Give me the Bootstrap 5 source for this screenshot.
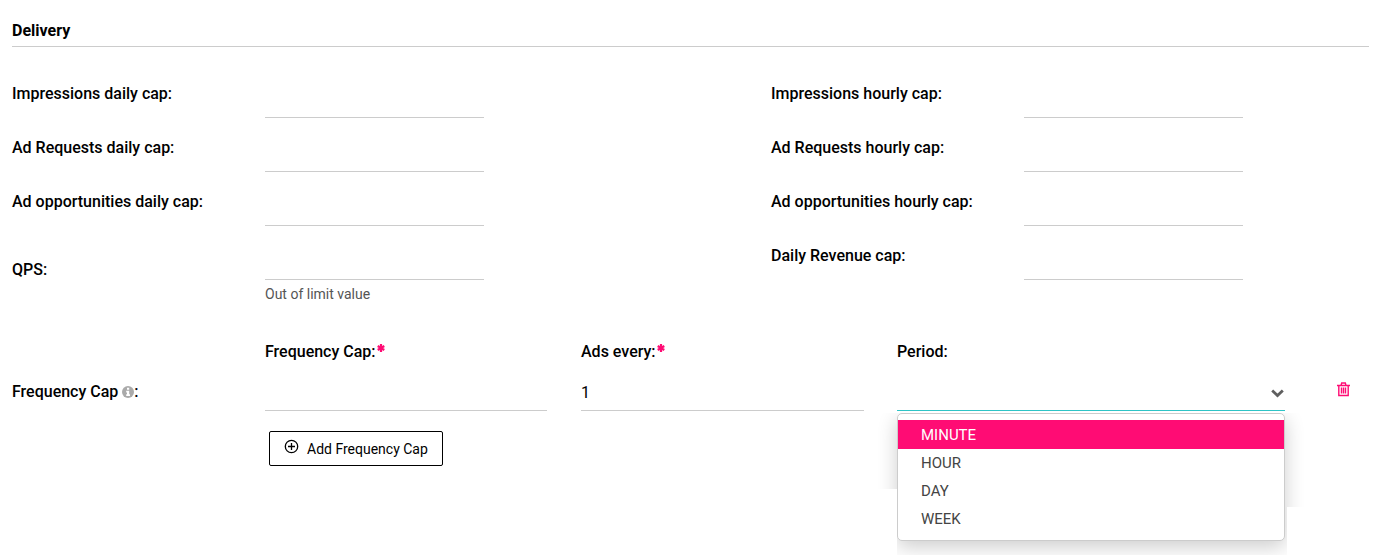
<!DOCTYPE html>
<html lang="en">
<head>
<meta charset="utf-8">
<meta name="viewport" content="width=device-width, initial-scale=1">
<title>Delivery</title>
<link href="https://cdn.jsdelivr.net/npm/bootstrap@5.3.0/dist/css/bootstrap.min.css" rel="stylesheet">
<style>
  body { font-family: Roboto, "Liberation Sans", sans-serif; font-size: 16px; line-height: 24px; color: #000; background: #fff; }
  .delivery { min-height: 100vh; padding: 19px 23px 88px 12px; }
  .section-title { font-size: 16px; font-weight: 700; line-height: 24px; padding-bottom: 3px; border-bottom: 1px solid #ccc; margin-bottom: 34px; }
  label, .col-title { font-weight: 500; }
  .cap-row { display: grid; grid-template-columns: 253fr 219fr 287fr 253fr 219fr 126fr; min-height: 54px; align-items: start; }
  .cap-row > * { min-width: 0; }
  .cap-row > label { padding-top: 1px; }
  .cap-row > .mid-label { padding-top: 15px; }
  .line-input { display: block; width: 100%; height: 37px; padding: 0 4px 0 0; border: 0; border-bottom: 1px solid #ccc; border-radius: 0; background: transparent; color: #000; font-size: 16px; outline: 0; }
  .freq-grid { display: grid; grid-template-columns: 253fr 282fr 34fr 283fr 33fr 388fr 84fr; }
  .freq-heads { padding-top: 36px; padding-bottom: 10px; }
  .col-title { padding-top: 6px; }
  .info-icon { vertical-align: -1px; }
  .hint { font-size: 14px; line-height: 20px; color: #555; padding-top: 4px; }
  .req { color: #ff0c74; margin-left: 1px; vertical-align: 5px; }
  .period-box { position: relative; height: 37px; border-bottom: 1px solid #2ec4c6; }
  .period-box select { height: 36px; border: 0; appearance: none; }
  .chevron { position: absolute; right: 1px; top: 15px; pointer-events: none; }
  .period-menu { position: absolute; top: 39px; left: 0; width: 100%; margin: 0; padding: 6px 0 7px; list-style: none; background: #fff; border: 1px solid #ccc; border-radius: 5px; box-shadow: 0 6px 20px rgba(0,0,0,.2);
    clip-path: polygon(-24px 0, calc(100% + 24px) 0, calc(100% + 24px) 94px, calc(100% + 2px) 94px, calc(100% + 2px) calc(100% + 24px), 0 calc(100% + 24px), 0 76px, -24px 76px); }
  .period-menu button { display: block; width: 100%; height: 28px; padding: 0 23px; border: 0; background: none; color: #444; font-size: 15px; line-height: 26px; text-align: left; }
  .period-menu button.active { height: 29px; background: #ff0c74; color: #fff; }
  .add-btn { height: 35px; margin: 20px 0 0 4px; padding: 0 14px; border: 1px solid #000; border-radius: 2px; background: #fff; color: #000; font-size: 14px; }
</style>
</head>
<body>
<main class="delivery">
  <h1 class="section-title">Delivery</h1>
  <form>
    <div class="cap-row">
      <label for="imp-day">Impressions daily cap:</label><input class="line-input" id="imp-day" type="text"><span></span>
      <label for="imp-hour">Impressions hourly cap:</label><input class="line-input" id="imp-hour" type="text">
    </div>
    <div class="cap-row">
      <label for="req-day">Ad Requests daily cap:</label><input class="line-input" id="req-day" type="text"><span></span>
      <label for="req-hour">Ad Requests hourly cap:</label><input class="line-input" id="req-hour" type="text">
    </div>
    <div class="cap-row">
      <label for="opp-day">Ad opportunities daily cap:</label><input class="line-input" id="opp-day" type="text"><span></span>
      <label for="opp-hour">Ad opportunities hourly cap:</label><input class="line-input" id="opp-hour" type="text">
    </div>
    <div class="cap-row">
      <label class="mid-label" for="qps">QPS:</label>
      <div><input class="line-input" id="qps" type="text" aria-describedby="qps-hint"><div class="hint" id="qps-hint">Out of limit value</div></div><span></span>
      <label for="revenue">Daily Revenue cap:</label><input class="line-input" id="revenue" type="text">
    </div>

    <div class="freq-grid freq-heads">
      <span></span>
      <label for="freq">Frequency Cap:<svg class="req" width="8" height="8" viewBox="0 0 8 8" aria-hidden="true"><path d="M4 0v8M.7 2l6.6 4M7.3 2L.7 6" stroke="currentColor" stroke-width="2.2"/></svg></label><span></span>
      <label for="every">Ads every:<svg class="req" width="8" height="8" viewBox="0 0 8 8" aria-hidden="true"><path d="M4 0v8M.7 2l6.6 4M7.3 2L.7 6" stroke="currentColor" stroke-width="2.2"/></svg></label><span></span>
      <label for="period">Period:</label>
    </div>
    <div class="freq-grid">
      <div class="col-title">Frequency Cap <svg class="info-icon" width="12" height="12" viewBox="0 0 12 12" aria-hidden="true"><circle cx="6" cy="6" r="6" fill="#aaa"/><path d="M5 1.8h2.2v2H5zM4.2 4.8h3v3.4H8V10H4.2V8.2H5V6.4H4.2z" fill="#fff"/></svg>:</div>
      <input class="line-input" id="freq" type="text"><span></span>
      <input class="line-input" id="every" type="text" value="1"><span></span>
      <div class="period-box">
        <select class="line-input" id="period"><option selected></option><option>MINUTE</option><option>HOUR</option><option>DAY</option><option>WEEK</option></select>
        <svg class="chevron" width="13" height="9" viewBox="0 0 13 9" aria-hidden="true"><path d="M1.2 1.5l5.3 5 5.3-5" fill="none" stroke="#5f5f5f" stroke-width="2.8"/></svg>
        <ul class="period-menu">
          <li><button class="active" type="button">MINUTE</button></li>
          <li><button type="button">HOUR</button></li>
          <li><button type="button">DAY</button></li>
          <li><button type="button">WEEK</button></li>
        </ul>
      </div>
      <div class="d-flex justify-content-center ps-4 pt-2 ms-2">
        <button class="btn p-0 border-0 d-flex align-self-start" type="button" aria-label="Delete frequency cap"><svg width="13" height="15" viewBox="0 0 13 15" fill="none" stroke="#ff0c74" stroke-width="1.4" aria-hidden="true"><path d="M0 3.5h13M1.8 3.5v10h9.4v-10M4 3.5l.7-2.5h3.6L9 3.5M4.5 5.500v6M6.5 5.500v6M8.5 5.500v6"/></svg></button>
      </div>
    </div>
    <div class="freq-grid">
      <span></span>
      <div><button class="add-btn d-inline-flex align-items-center" type="button"><svg class="me-2 mb-1" width="15" height="15" viewBox="0 0 15 15" fill="none" stroke="#000" stroke-width="1.3" aria-hidden="true"><circle cx="7.5" cy="7.5" r="6.2"/><path d="M7.5 4v7M4 7.5h7"/></svg><span class="text-nowrap">Add Frequency Cap</span></button></div>
    </div>
  </form>
</main>
<script src="https://cdn.jsdelivr.net/npm/bootstrap@5.3.0/dist/js/bootstrap.bundle.min.js"></script>
</body>
</html>
